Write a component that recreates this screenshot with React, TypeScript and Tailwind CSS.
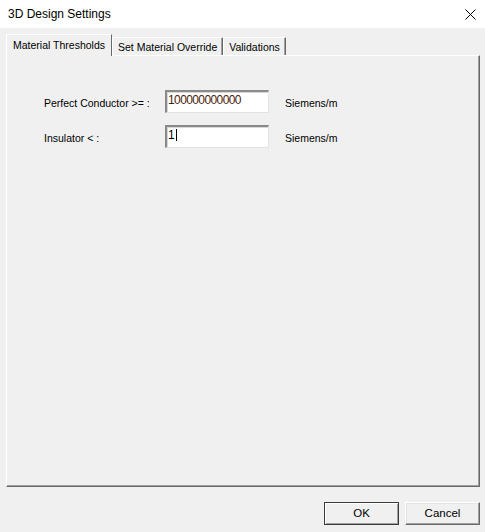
import React from 'react';

const ui = { fontFamily: '"Liberation Sans", Arial, sans-serif' };

function Tab({ label, active }: { label: string; active?: boolean }) {
  if (active) {
    return (
      <div className="relative z-10 -mb-[1px] flex h-[22px] items-start border-l border-t border-r border-l-white border-t-white border-r-[#696969] bg-[#f0f0f0] px-[6px] pt-[4px] text-[10.5px] leading-[13px] text-black">
        {label}
      </div>
    );
  }
  return (
    <div className="mt-[3px] flex h-[18px] items-start border-l border-t border-r border-l-white border-t-white border-r-[#696969] bg-[#f0f0f0] px-[5px] pt-[3px] text-[10.5px] leading-[13px] text-black shadow-[inset_-1px_0_0_#a0a0a0]">
      {label}
    </div>
  );
}

function Field({ label, value, color, caret }: { label: string; value: string; color: string; caret?: boolean }) {
  return (
    <div className="flex items-center">
      <div className="w-[121px] pt-[3px] text-[10.5px] leading-[13px] text-black">{label}</div>
      <div className="flex h-[23px] w-[104px] items-start border-l-2 border-t-2 border-r border-b border-l-[#8a8a8a] border-t-[#8a8a8a] border-r-[#e3e3e3] border-b-[#e3e3e3] bg-white pl-[1px] pt-[2px] text-[12px] leading-[12px] tracking-[-0.6px] shadow-[inset_1px_1px_0_#d8d8d8]">
        <span style={{ color }}>{value}</span>
        {caret && <span className="ml-[1.5px] block h-[12px] w-[1px] bg-black" />}
      </div>
      <div className="ml-[16px] pt-[3px] text-[10.5px] leading-[13px] text-black">Siemens/m</div>
    </div>
  );
}

export default function App() {
  return (
    <div className="flex h-[532px] w-[485px] flex-col bg-[#f0f0f0]" style={ui}>
      <div className="flex h-[28px] shrink-0 items-center justify-between bg-white pl-[8px] pr-[9px]">
        <span className="text-[12px] leading-[14px] text-black">3D Design Settings</span>
        <svg width="11" height="11" viewBox="0 0 11 11" className="mt-[1px]">
          <path d="M0.5 0.5 L10.5 10.5 M10.5 0.5 L0.5 10.5" stroke="#000" strokeWidth="1" fill="none" />
        </svg>
      </div>

      <div className="mt-[6px] flex flex-col px-[6px] pr-[5px]">
        <div className="flex items-start">
          <Tab label="Material Thresholds" active />
          <Tab label="Set Material Override" />
          <Tab label="Validations" />
        </div>
        <div className="flex h-[432px] flex-col gap-[12px] border-l border-t border-r border-b border-l-white border-t-white border-r-[#696969] border-b-[#696969] pl-[37px] pt-[34px] shadow-[inset_-1px_-1px_0_#a0a0a0]">
          <Field label="Perfect Conductor >= :" value="100000000000" color="#4a1c08" />
          <Field label="Insulator < :" value="1" color="#000" caret />
        </div>
      </div>

      <div className="mt-[15px] flex justify-end gap-[6px] pr-[5px]">
        <button className="h-[23px] w-[75px] border border-[#3c3c3c] bg-[#f0f0f0] text-[11.5px] text-black shadow-[inset_1px_1px_0_#fff,inset_-1px_-1px_0_#a0a0a0]">
          OK
        </button>
        <button className="h-[23px] w-[75px] border-l border-t border-r border-b border-l-white border-t-white border-r-[#696969] border-b-[#696969] bg-[#f0f0f0] text-[11.5px] text-black shadow-[inset_-1px_-1px_0_#a0a0a0,inset_1px_1px_0_#e3e3e3]">
          Cancel
        </button>
      </div>
    </div>
  );
}
